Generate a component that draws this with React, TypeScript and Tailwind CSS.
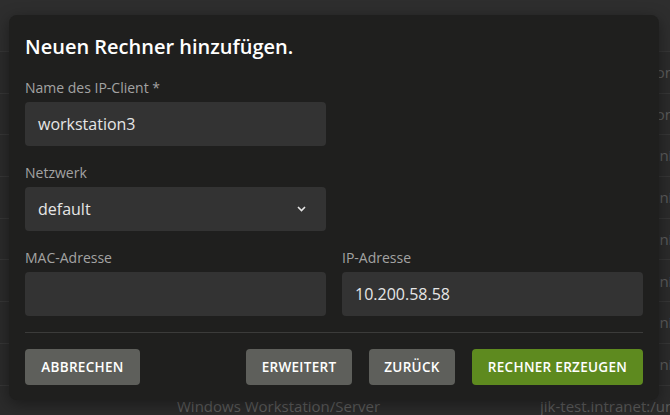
import React from "react";

const rows = [
  { b: "", c: "jik-test.intranet:/on" },
  { b: "", c: "jik-test.intranet:/on" },
  { b: "", c: "jik-test.intranet:univ" },
  { b: "", c: "jik-test.intranet:univ" },
  { b: "", c: "jik-test.intranet:univ" },
  { b: "", c: "jik-test.intranet:univ" },
  { b: "", c: "jik-test.intranet:univ" },
  { b: "", c: "jik-test.intranet:univ" },
  { b: "Windows Workstation/Server", c: "jik-test.intranet:/univ" },
];

function Field({ label, value, select }: { label: string; value?: string; select?: boolean }) {
  return (
    <div className="flex flex-col gap-1 flex-1 min-w-0">
      <div className="text-[14px] leading-5 text-[#a3a3a3]">{label}</div>
      <div className="h-[44px] rounded-[4px] bg-[#333333] flex items-center justify-between px-[13px] text-[16px] text-[#e6e6e6]">
        <span>{value}</span>
        {select && (
          <svg width="9" height="6" viewBox="0 0 9 6" className="mr-[7px]">
            <path d="M1 1 L4.5 4.5 L8 1" fill="none" stroke="#e6e6e6" strokeWidth="1.6" />
          </svg>
        )}
      </div>
    </div>
  );
}

function Btn({ children, green, w }: { children: React.ReactNode; green?: boolean; w: string }) {
  return (
    <button
      className={
        "h-[36px] rounded-[4px] text-[13.5px] font-semibold tracking-[0.3px] text-white flex items-center justify-center " +
        w +
        (green ? " bg-[#5e8a1f]" : " bg-[#5e5f5b]")
      }
    >
      {children}
    </button>
  );
}

export default function App() {
  return (
    <div
      className="relative w-[670px] h-[415px] overflow-hidden bg-[#2b2b2b]"
      style={{ fontFamily: '"Open Sans", "Noto Sans", sans-serif' }}
    >
      {/* background table */}
      <div className="flex flex-col">
        <div className="h-[52px] border-b border-[#363636] bg-[#2e2e2e]" />
        {rows.map((r, i) => (
          <div key={i} className="h-[41.7px] border-b border-[#363636] flex items-center text-[15px] text-[#5c5c5c] whitespace-nowrap">
            <div className="w-[177px] shrink-0" />
            <div className="w-[363px] shrink-0">{r.b}</div>
            <div className="shrink-0">{r.c}</div>
          </div>
        ))}
      </div>

      {/* dialog */}
      <div className="absolute left-[9px] top-[15px] w-[650px] h-[385px] rounded-[8px] bg-[#1f1f1e] shadow-[0_4px_16px_rgba(0,0,0,0.4)] px-4 pt-[18px] pb-[15px] flex flex-col">
        <h2 className="text-[20px] leading-7 font-semibold text-white">Neuen Rechner hinzufügen.</h2>
        <div className="mt-[17px] flex gap-4">
          <Field label="Name des IP-Client *" value="workstation3" />
          <div className="flex-1" />
        </div>
        <div className="mt-[17px] flex gap-4">
          <Field label="Netzwerk" value="default" select />
          <div className="flex-1" />
        </div>
        <div className="mt-[17px] flex gap-4">
          <Field label="MAC-Adresse" value="" />
          <Field label="IP-Adresse" value="10.200.58.58" />
        </div>
        <div className="mt-4 h-px bg-[#3b3b3a]" />
        <div className="mt-4 flex items-center">
          <Btn w="w-[115px]">ABBRECHEN</Btn>
          <div className="flex-1" />
          <div className="flex gap-[17px]">
            <Btn w="w-[106px]">ERWEITERT</Btn>
            <Btn w="w-[86px]">ZURÜCK</Btn>
            <Btn green w="w-[171px]">RECHNER ERZEUGEN</Btn>
          </div>
        </div>
      </div>
    </div>
  );
}
